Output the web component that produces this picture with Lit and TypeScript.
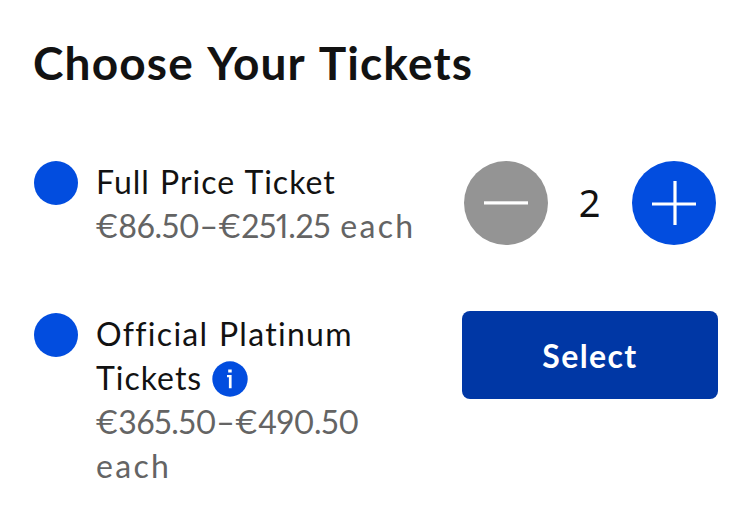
import { LitElement, html, css, nothing } from "lit";
import { customElement, property } from "lit/decorators.js";

@customElement("quantity-stepper")
class QuantityStepper extends LitElement {
  @property({ type: Number }) value = 2;

  static styles = css`
    :host { display: flex; align-items: center; width: 252px; margin-right: 2px; }
    button {
      width: 84px; height: 84px; padding: 0; border: 0; border-radius: 50%;
      background: #024ddf; flex: none; display: block;
    }
    button.muted { background: #949494; }
    svg { display: block; }
    output {
      flex: 1; text-align: center; color: #121212;
      font: 400 38px/44px "Noto Sans", sans-serif;
      padding: 0 1px 2px 0; box-sizing: border-box;
    }
  `;

  render() {
    return html`
      <button class="muted" aria-label="Remove ticket">
        <svg width="84" height="84" viewBox="0 0 84 84">
          <rect x="20" y="40.3" width="44" height="3.2" fill="#fff" />
        </svg>
      </button>
      <output>${this.value}</output>
      <button aria-label="Add ticket">
        <svg width="84" height="84" viewBox="0 0 84 84">
          <path d="M20 43H64M43 20V64" stroke="#fff" stroke-width="3.2" />
        </svg>
      </button>
    `;
  }
}

interface Ticket {
  name: string[];
  price: string;
  wrapUnit?: boolean;
  info?: boolean;
  selected?: number;
}

const tickets: Ticket[] = [
  { name: ["Full Price Ticket"], price: "€86.50–€251.25", selected: 2 },
  { name: ["Official Platinum", "Tickets"], price: "€365.50–€490.50", wrapUnit: true, info: true },
];

@customElement("app-root")
class AppRoot extends LitElement {
  static styles = css`
    :host {
      display: block; box-sizing: border-box; height: 524px;
      padding: 33px 32px 0 34px; background: #fff; color: #121212;
      font-family: Lato, sans-serif; overflow: hidden;
    }
    h1 {
      margin: 0 0 68px -1px; font-size: 46px; line-height: 60px; font-weight: 700;
      letter-spacing: 1.15px; word-spacing: 2.8px; white-space: nowrap;
    }
    .row { display: flex; align-items: flex-start; margin-bottom: 65px; }
    .dot { width: 44px; height: 44px; border-radius: 50%; background: #024ddf; flex: none; }
    .details { flex: 1; margin: -1px 0 0 18px; font-size: 32px; line-height: 44px; }
    .line { display: flex; align-items: center; height: 44px; white-space: nowrap; letter-spacing: 1px; word-spacing: 1px; }
    .line.wide { letter-spacing: 1.3px; }
    .price { color: #646464; }
    .amount { font-variant-numeric: proportional-nums; letter-spacing: -0.32px; margin-left: -1px; }
    .unit { letter-spacing: 2.3px; }
    .amount + .unit { margin-left: 10px; }
    .info { margin: 2px 0 0 10px; }
    .select {
      width: 256px; height: 88px; margin-top: -2px; padding: 2px 0 0; border: 0; border-radius: 8px;
      background: #0037a5; color: #fff; font: 700 32px/44px Lato, sans-serif; letter-spacing: 1.4px;
    }
  `;

  private infoIcon() {
    return html`<svg class="info" width="36" height="36" viewBox="0 0 36 36" role="img" aria-label="More information">
      <circle cx="18" cy="18" r="17.7" fill="#024ddf" />
      <path d="M16.2 8.4h3.5v3.2h-3.5zM15 14h4.6v13.3h-2.7V16.3H15z" fill="#fff" />
    </svg>`;
  }

  private price(t: Ticket) {
    const amount = html`<span class="amount">${t.price}</span>`;
    const unit = html`<span class="unit">each</span>`;
    return t.wrapUnit
      ? html`<div class="line price">${amount}</div><div class="line price">${unit}</div>`
      : html`<div class="line price">${amount}${unit}</div>`;
  }

  render() {
    return html`
      <h1>Choose Your Tickets</h1>
      ${tickets.map((t) => html`
        <div class="row">
          <span class="dot"></span>
          <div class="details">
            ${t.name.map((line, i) => html`<div class="line ${t.info && i === 0 ? "wide" : ""}">
              <span>${line}</span>${t.info && i === t.name.length - 1 ? this.infoIcon() : nothing}
            </div>`)}
            ${this.price(t)}
          </div>
          ${t.selected
            ? html`<quantity-stepper .value=${t.selected}></quantity-stepper>`
            : html`<button class="select">Select</button>`}
        </div>
      `)}
    `;
  }
}
